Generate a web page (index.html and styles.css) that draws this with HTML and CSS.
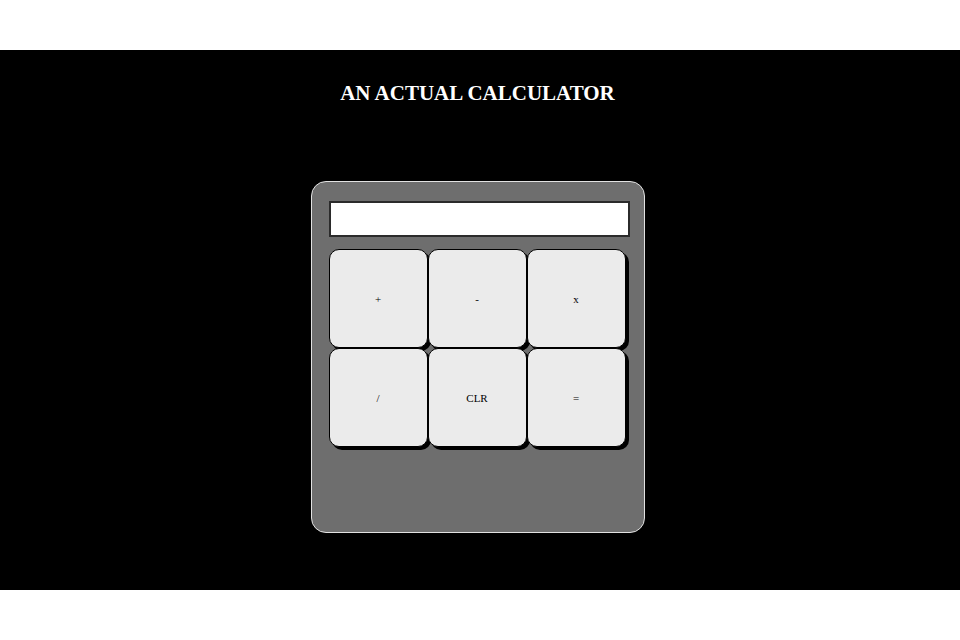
FILE: index.html
```html
<!DOCTYPE html>
<html lang="en">
<head>
<meta charset="utf-8">
<title>An Actual Calculator</title>
<link rel="stylesheet" href="styles.css">
</head>
<body>
<main class="stage">
  <h1 class="title">AN ACTUAL CALCULATOR</h1>
  <div class="calculator">
    <input class="display" type="text" value="">
    <div class="keys">
      <button class="key">+</button>
      <button class="key">-</button>
      <button class="key">x</button>
      <button class="key">/</button>
      <button class="key">CLR</button>
      <button class="key">=</button>
    </div>
  </div>
</main>
</body>
</html>
```
FILE: styles.css
```css
html, body {
  margin: 0;
  padding: 0;
  background: #ffffff;
}

.stage {
  margin-top: 50px;
  height: 540px;
  background: #000000;
  display: flex;
  flex-direction: column;
  align-items: center;
  padding-right: 5px;
  box-sizing: border-box;
  font-family: "Liberation Serif", "Times New Roman", serif;
}

.title {
  margin: 31px 0 0 0;
  color: #ffffff;
  font-size: 21px;
  line-height: 24px;
  font-weight: bold;
}

.calculator {
  margin-top: 76px;
  width: 334px;
  height: 352px;
  box-sizing: border-box;
  background: #6e6e6e;
  border: 1px solid #e2e2e2;
  border-radius: 15px;
  padding: 19px 0 0 17px;
  display: flex;
  flex-direction: column;
  gap: 12px;
}

.display {
  width: 301px;
  height: 36px;
  box-sizing: border-box;
  margin: 0;
  border: 2px solid #2b2b2b;
  background: #ffffff;
  padding: 0 6px;
  outline: none;
}

.keys {
  display: grid;
  grid-template-columns: repeat(3, 99px);
  grid-auto-rows: 99px;
}

.key {
  box-sizing: border-box;
  margin: 0;
  background: #ebebeb;
  border: 1px solid #000000;
  border-radius: 10px;
  box-shadow: 3px 3px 0 #000000;
  font-family: "Liberation Serif", "Times New Roman", serif;
  font-size: 11px;
  color: #000000;
  padding: 0;
}
```
